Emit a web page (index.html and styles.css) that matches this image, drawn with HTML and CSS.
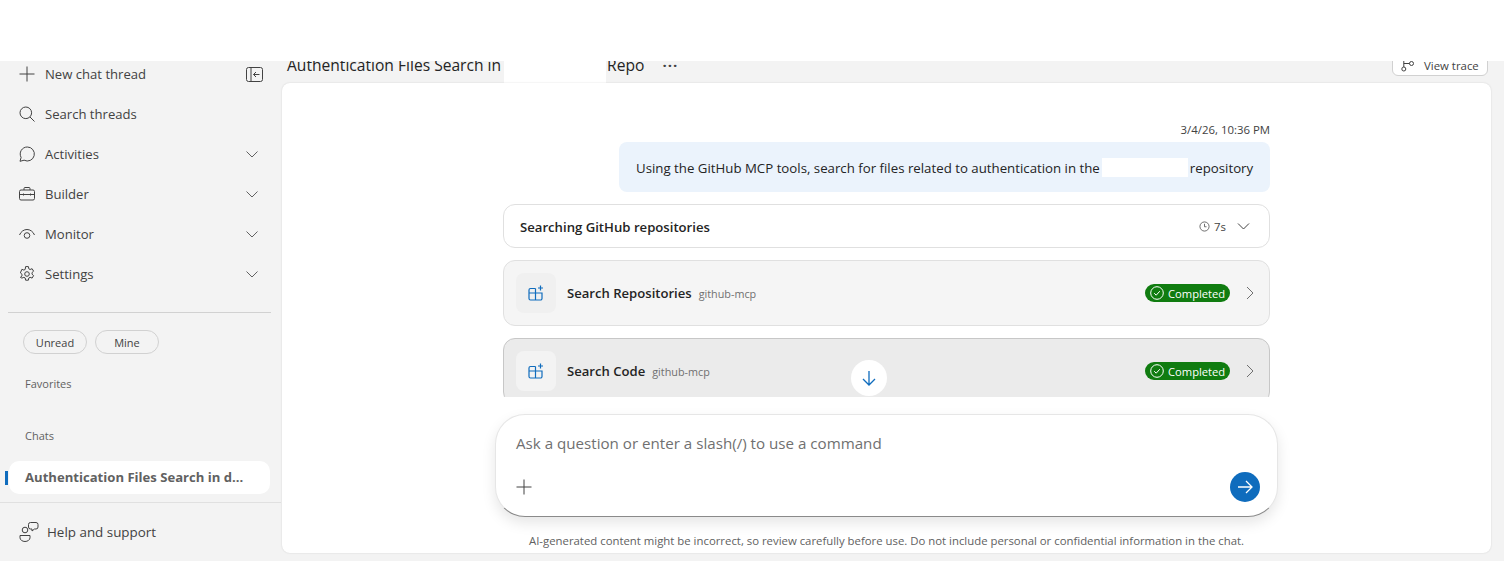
FILE: index.html
```html
<!DOCTYPE html>
<html lang="en">
<head>
  <meta charset="UTF-8">
  <meta name="viewport" content="width=device-width, initial-scale=1.0">
  <title>Authentication Files Search</title>
  <link rel="stylesheet" href="styles.css">
</head>
<body>

  <div class="topbar"></div>

  <div class="shell">

    <div class="sidebar">
      <div class="nav">
        <div class="nav-item">
          <svg class="nav-icon" viewBox="0 0 16 16"><path d="M8 .5v15M.5 8h15"/></svg>
          <span class="nav-label">New chat thread</span>
          <svg class="collapse-icon" viewBox="0 0 17 15"><rect x=".5" y=".5" width="16" height="14" rx="2"/><path d="M5 .5v14M13.500 7.500H7.500M10 5 7.500 7.500 10 10"/></svg>
        </div>
        <div class="nav-item">
          <svg class="nav-icon" viewBox="0 0 16 16"><circle cx="6.800" cy="6.800" r="5.800"/><path d="m11 11 4.500 4.500"/></svg>
          <span class="nav-label">Search threads</span>
        </div>
        <div class="nav-item">
          <svg class="nav-icon" viewBox="0 0 16 16"><path d="M8.300 1a7 7 0 1 1-3.200 13.200L1 15.300l1.100-3.900A7 7 0 0 1 8.300 1Z"/></svg>
          <span class="nav-label">Activities</span>
          <svg class="chevron" viewBox="0 0 12 7"><path d="m.5.5 5.500 5.500L11.500.5"/></svg>
        </div>
        <div class="nav-item">
          <svg class="nav-icon" viewBox="0 0 16 16"><rect x=".5" y="4" width="15" height="10" rx="1.500"/><path d="M5 4V2.500A1 1 0 0 1 6 1.500h4a1 1 0 0 1 1 1V4M.5 8.500h15M4.500 7.500v2M11.500 7.500v2"/></svg>
          <span class="nav-label">Builder</span>
          <svg class="chevron" viewBox="0 0 12 7"><path d="m.5.5 5.500 5.500L11.500.5"/></svg>
        </div>
        <div class="nav-item">
          <svg class="nav-icon" viewBox="0 0 16 16"><path d="M.5 9C2 5.500 4.800 3.500 8 3.500s6 2 7.500 5.500"/><circle cx="8" cy="9.500" r="2.800"/></svg>
          <span class="nav-label">Monitor</span>
          <svg class="chevron" viewBox="0 0 12 7"><path d="m.5.5 5.500 5.500L11.500.5"/></svg>
        </div>
        <div class="nav-item">
          <svg class="nav-icon" viewBox="0 0 16 16"><circle cx="8" cy="8" r="2.300"/><path d="M6.600 .6h2.800l.4 2.200 1.300.7 2-.8 1.500 2.500-1.600 1.400v1.600l1.600 1.400-1.500 2.500-2-.8-1.300.7-.4 2.200H6.600l-.4-2.200-1.300-.7-2 .8L1.400 11.300 3 9.900V8.300L1.400 6.900 2.900 3.300l2 .8 1.300-.7Z"/></svg>
          <span class="nav-label">Settings</span>
          <svg class="chevron" viewBox="0 0 12 7"><path d="m.5.5 5.500 5.500L11.500.5"/></svg>
        </div>
      </div>

      <div class="chips">
        <span class="chip">Unread</span>
        <span class="chip">Mine</span>
      </div>

      <div class="section-label favorites">Favorites</div>
      <div class="section-label chats">Chats</div>

      <div class="thread">
        <span class="thread-title">Authentication Files Search in d...</span>
      </div>

      <div class="help">
        <svg class="help-icon" viewBox="0 0 20 20"><circle cx="6" cy="8" r="2.800"/><path d="M1 13.500h10v2.300c0 2-2.300 3.700-5 3.700s-5-1.700-5-3.700Z"/><path d="M11.500.5h5.500a2 2 0 0 1 2 2v2.500a2 2 0 0 1-2 2h-1.500L13 9V7h-1.500a2 2 0 0 1-2-2V2.500a2 2 0 0 1 2-2Z"/></svg>
        <span>Help and support</span>
      </div>
    </div>

    <div class="main">
      <div class="title-row">
        <span class="title">Authentication Files Search in</span>
        <span class="title-mask"></span>
        <span class="title">Repo</span>
        <span class="more">···</span>
        <button class="trace-btn">
          <svg class="trace-icon" viewBox="0 0 14 14"><circle cx="2.800" cy="11" r="2"/><circle cx="10.500" cy="5.500" r="2"/><path d="M2.800 9V1M1 1h3.500M2.800 5.500h5.700"/></svg>
          View trace
        </button>
      </div>

      <div class="panel">
        <div class="messages">
          <div class="timestamp">3/4/26, 10:36 PM</div>
          <div class="bubble">
            Using the GitHub MCP tools, search for files related to authentication in the
            <span class="bubble-mask"></span>
            repository
          </div>

          <div class="progress-card">
            <span class="progress-title">Searching GitHub repositories</span>
            <svg class="clock" viewBox="0 0 12 12"><circle cx="6" cy="6" r="5"/><path d="M6 3v3.300h2.200"/></svg>
            <span class="elapsed">7s</span>
            <svg class="chevron dark" viewBox="0 0 12 7"><path d="m.5.5 5.500 5.500L11.500.5"/></svg>
          </div>

          <div class="tool-card">
            <div class="tool-icon">
              <svg viewBox="0 0 16 16"><path d="M7.500 3.500H2.500a1.500 1.500 0 0 0-1.500 1.500v8.500A1.500 1.500 0 0 0 2.500 15h10a1.500 1.500 0 0 0 1.500-1.500V8H1M7.500 3.500V15M12.500.5v5M10 3h5"/></svg>
            </div>
            <span class="tool-name">Search Repositories</span>
            <span class="tool-source">github-mcp</span>
            <span class="badge">
              <svg viewBox="0 0 14 14"><circle cx="7" cy="7" r="6.300"/><path d="m4.200 7.200 2 2 3.600-4"/></svg>
              Completed
            </span>
            <svg class="chevron-right" viewBox="0 0 8 14"><path d="m1 1 6 6-6 6"/></svg>
          </div>

          <div class="tool-card hover">
            <div class="tool-icon">
              <svg viewBox="0 0 16 16"><path d="M7.500 3.500H2.500a1.500 1.500 0 0 0-1.500 1.500v8.500A1.500 1.500 0 0 0 2.500 15h10a1.500 1.500 0 0 0 1.500-1.500V8H1M7.500 3.500V15M12.500.5v5M10 3h5"/></svg>
            </div>
            <span class="tool-name">Search Code</span>
            <span class="tool-source">github-mcp</span>
            <span class="badge">
              <svg viewBox="0 0 14 14"><circle cx="7" cy="7" r="6.300"/><path d="m4.200 7.200 2 2 3.600-4"/></svg>
              Completed
            </span>
            <svg class="chevron-right" viewBox="0 0 8 14"><path d="m1 1 6 6-6 6"/></svg>
          </div>

          <button class="scroll-btn">
            <svg viewBox="0 0 16 16"><path d="M8 1v14M2 9l6 6 6-6"/></svg>
          </button>
        </div>

        <div class="composer">
          <div class="composer-text">Ask a question or enter a slash(/) to use a command</div>
          <div class="composer-actions">
            <svg class="composer-plus" viewBox="0 0 16 16"><path d="M8 .5v15M.5 8h15"/></svg>
            <button class="send-btn">
              <svg viewBox="0 0 16 16"><path d="M1 8h14M9 2l6 6-6 6"/></svg>
            </button>
          </div>
        </div>

        <div class="disclaimer">AI-generated content might be incorrect, so review carefully before use. Do not include personal or confidential information in the chat.</div>
      </div>
    </div>

  </div>

</body>
</html>
```

FILE: styles.css
```css
* {
  box-sizing: border-box;
}

html,
body {
  height: 100%;
}

body {
  margin: 0;
  background-color: #ffffff;
  font-family: "Open Sans", "Noto Sans", sans-serif;
  color: #424242;
  overflow: hidden;
}

svg {
  fill: none;
  stroke: currentColor;
  stroke-width: 1;
  flex-shrink: 0;
}

.topbar {
  height: 61px;
  background-color: #ffffff;
}

.shell {
  display: flex;
  height: 500px;
  background-color: #f3f3f3;
  overflow: hidden;
}

/* sidebar */
.sidebar {
  width: 282px;
  flex-shrink: 0;
  display: flex;
  flex-direction: column;
}

.nav {
  margin-top: -7px;
  margin-left: 8px;
  margin-right: 11px;
  padding-bottom: 18px;
  border-bottom: 1px solid #d1d1d1;
}

.nav-item {
  display: flex;
  align-items: center;
  height: 40px;
  padding-left: 11px;
  font-size: 13.100px;
}

.nav-icon {
  width: 16px;
  height: 16px;
  color: #424242;
}

.nav-label {
  margin-left: 10px;
  flex: 1;
}

.collapse-icon {
  width: 17px;
  height: 15px;
  margin-right: 8px;
}

.chevron {
  width: 12px;
  height: 7px;
  margin-right: 13px;
  color: #616161;
}

.chips {
  display: flex;
  gap: 8px;
  margin-top: 17px;
  margin-left: 23px;
}

.chip {
  width: 64px;
  height: 24px;
  display: flex;
  align-items: center;
  justify-content: center;
  border: 1px solid #d1d1d1;
  border-radius: 12px;
  font-size: 11px;
}

.section-label {
  margin-left: 25px;
  font-size: 11px;
  line-height: 16px;
  color: #616161;
}

.favorites {
  margin-top: 22px;
}

.chats {
  margin-top: 36px;
}

.thread {
  position: relative;
  display: flex;
  align-items: center;
  height: 33px;
  margin-top: 17px;
  margin-left: 9px;
  margin-right: 12px;
  padding-left: 16px;
  background-color: #ffffff;
  border-radius: 10px;
}

.thread::before {
  content: "";
  position: absolute;
  left: -4px;
  top: 10px;
  width: 3px;
  height: 14px;
  background-color: #0f6cbd;
}

.thread-title {
  font-size: 13.100px;
  font-weight: 700;
  color: #616161;
  white-space: nowrap;
}

.help {
  display: flex;
  align-items: center;
  gap: 8px;
  height: 60px;
  margin-top: 8px;
  margin-right: 1px;
  padding-left: 19px;
  border-top: 1px solid #e0e0e0;
  font-size: 13.400px;
}

.help-icon {
  width: 20px;
  height: 20px;
}

/* main area */
.main {
  flex: 1;
  display: flex;
  flex-direction: column;
  padding-right: 13px;
}

.title-row {
  display: flex;
  align-items: center;
  flex-shrink: 0;
  height: 36px;
  margin-top: -14px;
  padding-left: 5px;
}

.title {
  font-size: 15.600px;
  font-weight: 500;
  color: #242424;
  white-space: nowrap;
}

.title-mask {
  width: 102px;
  height: 36px;
  margin: 0 1px 0 3px;
  background-color: #ffffff;
}

.more {
  margin-left: 18px;
  font-size: 15px;
  font-weight: 700;
  letter-spacing: 1px;
}

.trace-btn {
  display: flex;
  align-items: center;
  gap: 9px;
  align-self: flex-end;
  width: 96px;
  height: 22px;
  margin-left: auto;
  margin-right: 3px;
  margin-bottom: 7px;
  padding: 0 0 0 8px;
  background-color: #ffffff;
  border: 1px solid #d1d1d1;
  border-radius: 6px;
  font-family: inherit;
  font-size: 11.400px;
  color: #424242;
}

.trace-icon {
  width: 14px;
  height: 14px;
}

.panel {
  flex: 1;
  display: flex;
  flex-direction: column;
  align-items: center;
  margin-bottom: 8px;
  background-color: #ffffff;
  border-radius: 8px;
  box-shadow: 0 0 2px rgba(0, 0, 0, 0.14);
}

.messages {
  position: relative;
  width: 767px;
  height: 314px;
  flex-shrink: 0;
  padding-top: 38px;
  overflow: hidden;
}

.timestamp {
  text-align: right;
  font-size: 11.400px;
  line-height: 18px;
}

.bubble {
  display: flex;
  align-items: center;
  gap: 1px;
  width: 651px;
  height: 50px;
  margin-top: 3px;
  margin-left: auto;
  padding-top: 1px;
  padding-left: 17px;
  background-color: #ebf3fc;
  border-radius: 8px;
  font-size: 13.250px;
  color: #242424;
  white-space: nowrap;
}

.bubble-mask {
  width: 86px;
  height: 19px;
  margin: 0 1px;
  background-color: #ffffff;
}

.progress-card {
  display: flex;
  align-items: center;
  height: 44px;
  margin-top: 12px;
  padding: 1px 19px 0 16px;
  border: 1px solid #e0e0e0;
  border-radius: 12px;
}

.progress-title {
  flex: 1;
  font-size: 13.150px;
  font-weight: 600;
  color: #242424;
}

.clock {
  width: 11px;
  height: 11px;
  margin-right: 4px;
  color: #616161;
}

.elapsed {
  margin-right: 11px;
  font-size: 11.400px;
}

.chevron.dark {
  width: 13px;
  margin-right: 0;
  color: #424242;
}

.tool-card {
  display: flex;
  align-items: center;
  height: 66px;
  margin-top: 12px;
  padding: 0 15px 0 12px;
  background-color: #f5f5f5;
  border: 1px solid #e0e0e0;
  border-radius: 12px;
}

.tool-card.hover {
  background-color: #ebebeb;
  border-color: #c7c7c7;
}

.tool-icon {
  display: flex;
  align-items: center;
  justify-content: center;
  width: 40px;
  height: 40px;
  background-color: #f0f0f0;
  border-radius: 8px;
  color: #0f6cbd;
}

.tool-card.hover .tool-icon {
  background-color: #f3f3f3;
}

.tool-icon svg {
  width: 16px;
  height: 16px;
  stroke-width: 1.200;
}

.tool-name {
  margin-left: 11px;
  font-size: 13.100px;
  font-weight: 600;
  color: #242424;
}

.tool-source {
  margin-left: 7px;
  font-size: 10.800px;
  color: #707070;
}

.badge {
  display: flex;
  align-items: center;
  gap: 4px;
  width: 85px;
  height: 18px;
  margin-left: auto;
  padding-left: 5px;
  background-color: #107c10;
  border-radius: 9px;
  font-size: 11.200px;
  color: #ffffff;
}

.badge svg {
  width: 14px;
  height: 14px;
}

.chevron-right {
  width: 8px;
  height: 14px;
  margin-left: 16px;
  color: #707070;
}

.scroll-btn {
  position: absolute;
  left: 348px;
  top: 277px;
  display: flex;
  align-items: center;
  justify-content: center;
  width: 36px;
  height: 36px;
  padding: 0;
  background-color: #ffffff;
  border: none;
  border-radius: 50%;
  color: #0f6cbd;
}

.scroll-btn svg {
  width: 16px;
  height: 16px;
  stroke-width: 1.300;
}

.composer {
  width: 783px;
  height: 103px;
  flex-shrink: 0;
  margin-top: 17px;
  padding: 17px 17px 0 20px;
  background-color: #ffffff;
  border: 1px solid #e6e6e6;
  border-bottom-color: #8a8a8a;
  border-radius: 30px;
  box-shadow: 0 6px 14px rgba(0, 0, 0, 0.1);
}

.composer-text {
  font-size: 15.150px;
  line-height: 22px;
  color: #707070;
}

.composer-actions {
  display: flex;
  align-items: center;
  justify-content: space-between;
  margin-top: 18px;
}

.composer-plus {
  width: 16px;
  height: 16px;
  color: #424242;
}

.send-btn {
  display: flex;
  align-items: center;
  justify-content: center;
  width: 30px;
  height: 30px;
  padding: 0;
  background-color: #0f6cbd;
  border: none;
  border-radius: 50%;
  color: #ffffff;
}

.send-btn svg {
  width: 16px;
  height: 16px;
  stroke-width: 1.300;
}

.disclaimer {
  margin-top: 16px;
  font-size: 11.370px;
  line-height: 16px;
  color: #616161;
  white-space: nowrap;
}
```
